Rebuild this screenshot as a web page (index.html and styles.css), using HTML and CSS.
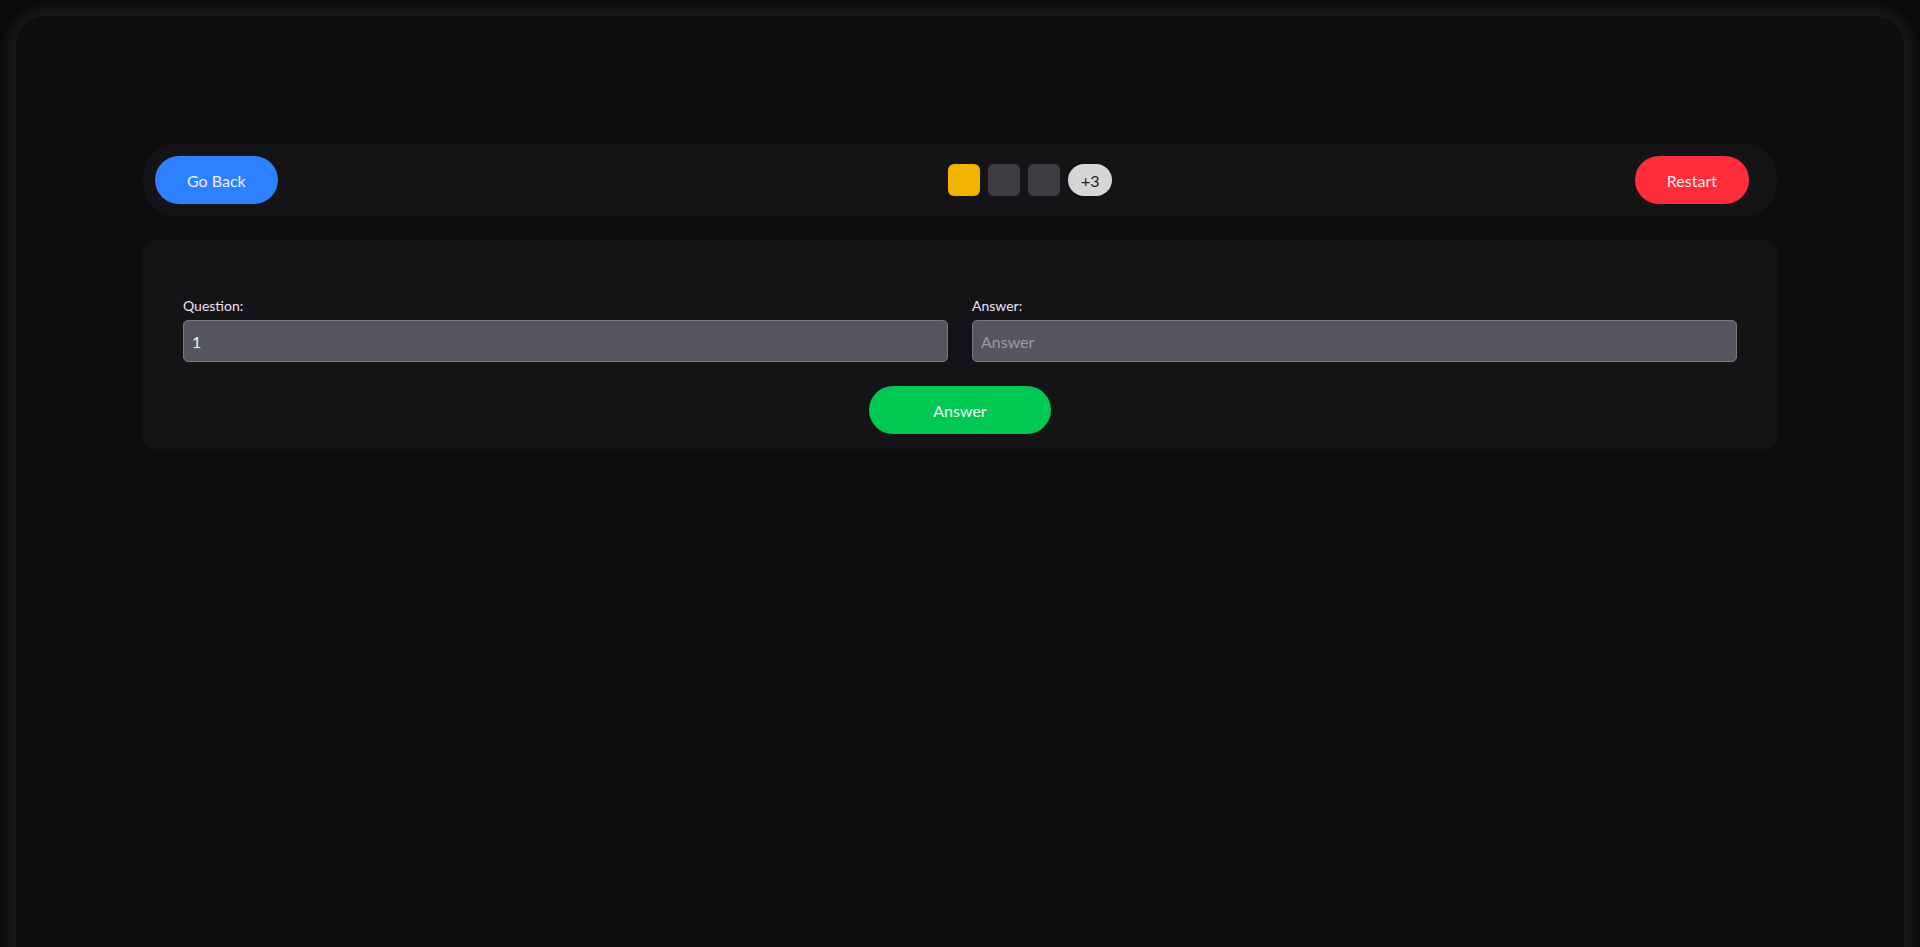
FILE: index.html
```html
<!DOCTYPE html>
<html lang="en">
<head>
<meta charset="utf-8">
<title>Quiz</title>
<link rel="stylesheet" href="styles.css">
</head>
<body>
<div class="frame">
  <main class="screen">
    <div class="topbar">
      <button class="btn btn-blue">Go Back</button>
      <div class="progress">
        <span class="dot dot-current"></span>
        <span class="dot"></span>
        <span class="dot"></span>
        <span class="more">+3</span>
      </div>
      <button class="btn btn-red">Restart</button>
    </div>
    <section class="card">
      <div class="fields">
        <div class="field">
          <label class="label">Question:</label>
          <input class="input" type="text" value="1" readonly>
        </div>
        <div class="field">
          <label class="label">Answer:</label>
          <input class="input" type="text" placeholder="Answer">
        </div>
      </div>
      <div class="actions">
        <button class="btn btn-green">Answer</button>
      </div>
    </section>
  </main>
</div>
</body>
</html>
```
FILE: styles.css
```css
html, body {
  margin: 0;
  padding: 0;
  background: #0c0c0e;
  overflow: hidden;
  font-family: "Lato", "Open Sans", "Liberation Sans", sans-serif;
}
.frame {
  padding: 16px 16px 0;
}
.screen {
  background: #0e0e10;
  border-radius: 31px;
  min-height: 1000px;
  padding: 128px 127px;
  box-sizing: border-box;
  box-shadow: 0 0 6px 10px #161618;
}
.topbar {
  display: flex;
  align-items: center;
  justify-content: space-between;
  background: #141416;
  border-radius: 32px;
  padding: 12px 28px 12px 12px;
  height: 72px;
  box-sizing: border-box;
}
.btn {
  border: none;
  height: 48px;
  border-radius: 24px;
  padding: 0 32px;
  font-family: inherit;
  font-size: 16px;
  color: #eef0ff;
  cursor: pointer;
}
.btn-blue { background: #2d80ff; }
.btn-red { background: #ff2d3a; color: #ffe8ee; }
.btn-green { background: #00c853; padding: 0 64px; color: #f0fff4; }
.progress {
  width: 312px;
  display: flex;
  justify-content: flex-end;
  align-items: center;
  gap: 8px;
}
.dot {
  width: 32px;
  height: 32px;
  border-radius: 6px;
  background: #3c3d42;
}
.dot-current { background: #f2b200; }
.more {
  width: 44px;
  height: 32px;
  border-radius: 16px;
  background: #d6d6d6;
  color: #1e1e22;
  font-size: 16px;
  display: flex;
  align-items: center;
  justify-content: center;
}
.card {
  margin-top: 24px;
  background: #141416;
  border-radius: 12px;
  padding: 56px 40px 15px;
}
.fields {
  display: grid;
  grid-template-columns: 1fr 1fr;
  gap: 24px;
}
.field {
  display: flex;
  flex-direction: column;
}
.label {
  font-size: 14px;
  line-height: 20px;
  color: #ece2fa;
  margin-bottom: 4px;
}
.input {
  height: 42px;
  box-sizing: border-box;
  background: #55555f;
  border: 1px solid #7a7a84;
  border-radius: 5px;
  padding: 0 8px;
  font-family: inherit;
  font-size: 16px;
  color: #f4f4f8;
  outline: none;
}
.input::placeholder { color: #9a9aa4; }
.actions {
  display: flex;
  justify-content: center;
  margin-top: 24px;
}
```
